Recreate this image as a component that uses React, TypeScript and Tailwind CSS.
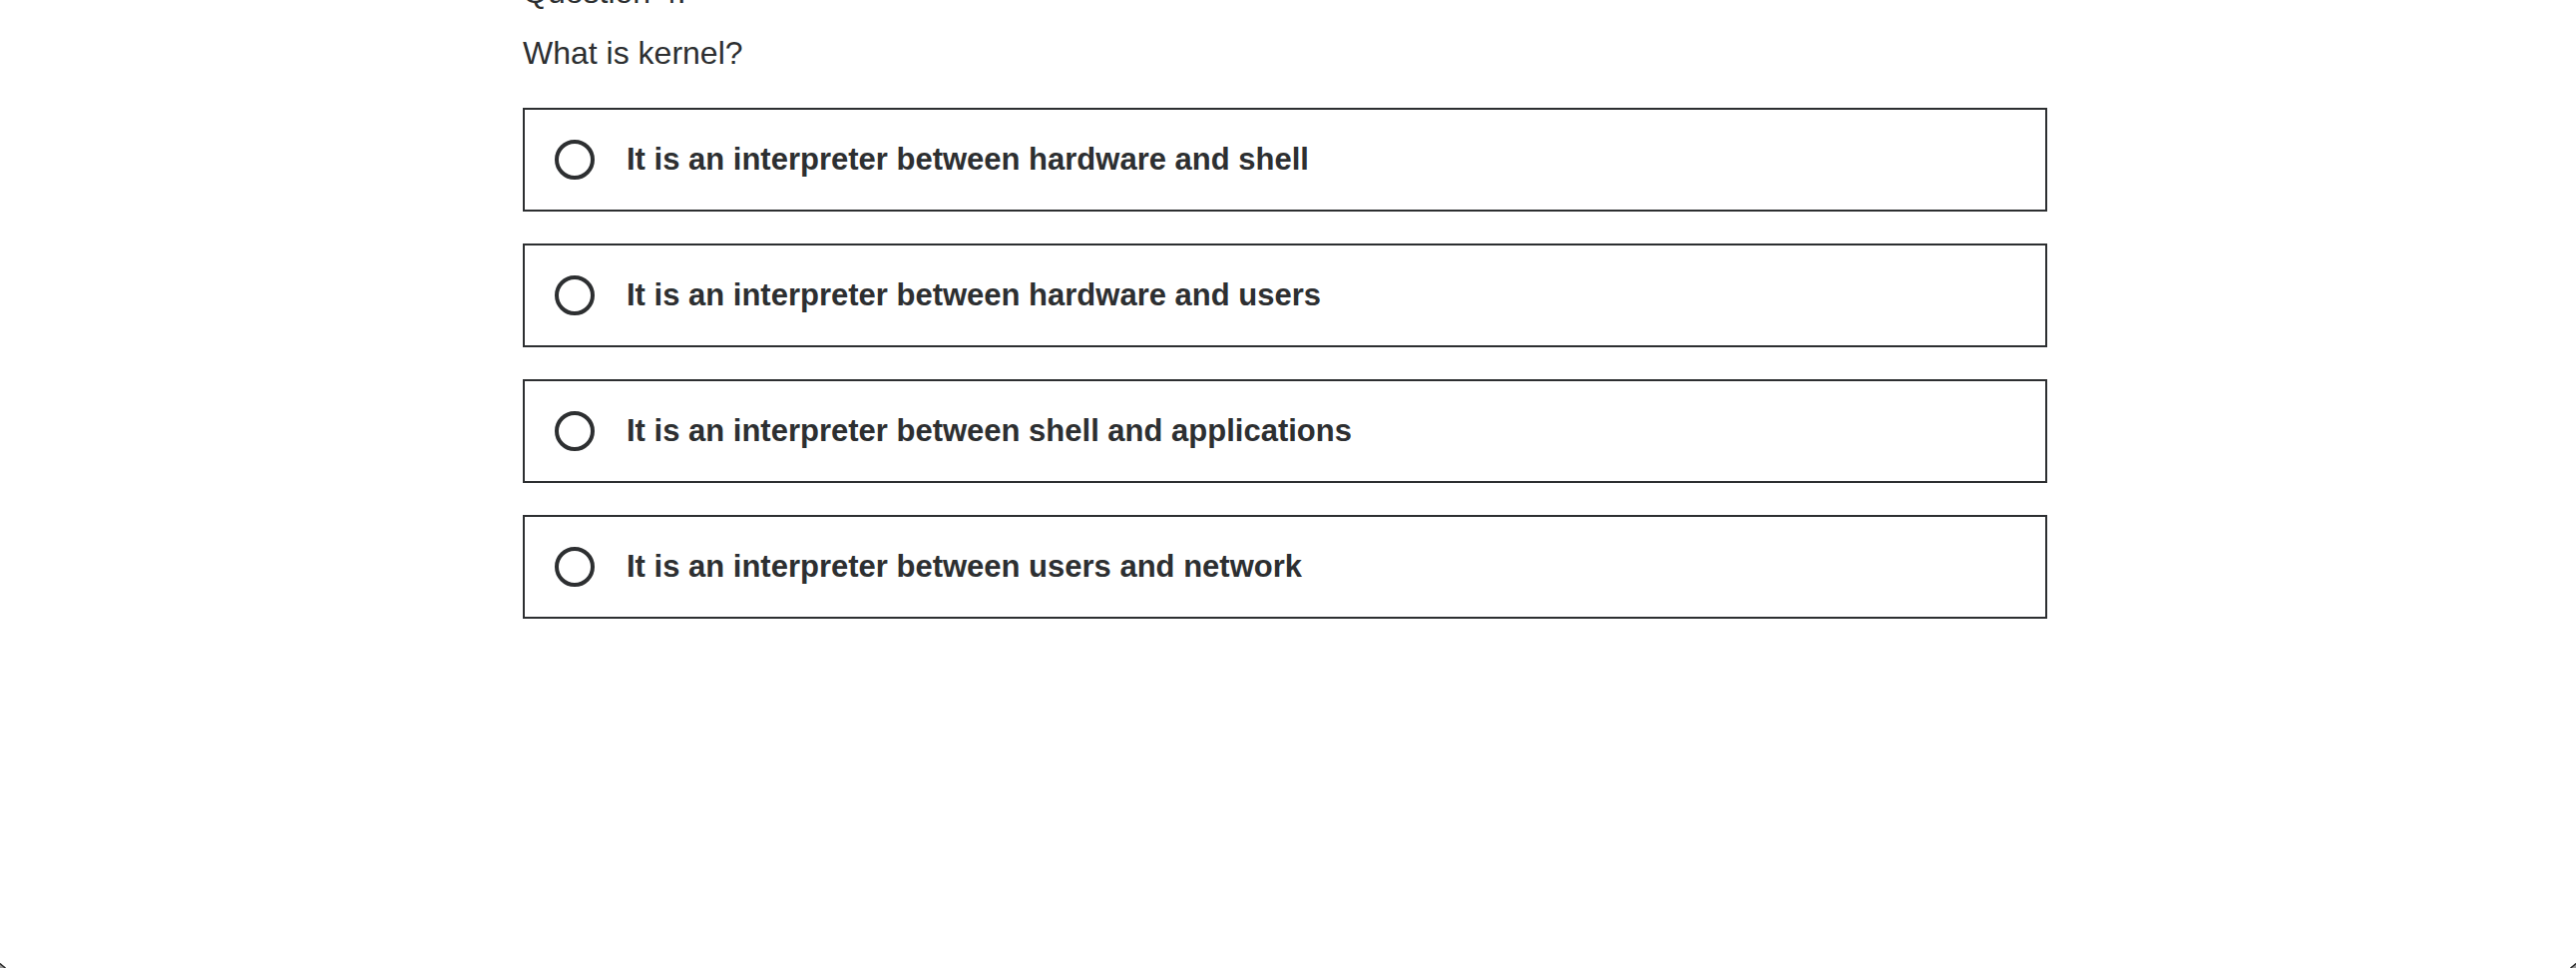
import { useState } from 'react';

const options = [
  'It is an interpreter between hardware and shell',
  'It is an interpreter between hardware and users',
  'It is an interpreter between shell and applications',
  'It is an interpreter between users and network',
];

function WindowCorner({ className }: { className: string }) {
  return (
    <svg aria-hidden="true" viewBox="0 0 6 5" className={`absolute bottom-0 h-[5px] w-[6px] ${className}`}>
      <path d="M0 0 L6 5 L0 5 Z" fill="#9a9a9a" />
      <path d="M0 0.5 Q2.5 3 5.5 5" fill="none" stroke="#2b2b2b" strokeWidth="1.4" />
    </svg>
  );
}

export default function App() {
  const [selected, setSelected] = useState<number | null>(null);

  return (
    <main className="relative flex h-screen justify-center overflow-hidden bg-white pr-[6px] font-['Liberation_Sans',Arial,sans-serif] text-[#2d2f31]">
      <form className="-mt-[30px] w-full max-w-[1528px]">
        <p className="text-[32px] leading-[45px]">Question 4:</p>
        <fieldset className="mt-4">
          <legend className="text-[32px] leading-[45px]">What is kernel?</legend>
          <div className="mt-8 flex flex-col gap-8">
            {options.map((option, index) => (
              <label
                key={option}
                className="flex h-[104px] cursor-pointer items-center gap-8 border-2 border-[#2d2f31] px-[30px]"
              >
                <input
                  type="radio"
                  name="answer"
                  checked={selected === index}
                  onChange={() => setSelected(index)}
                  className="size-10 shrink-0 appearance-none rounded-full border-4 border-[#2d2f31] bg-white checked:border-[12px]"
                />
                <span className="text-[31px] leading-[44px] font-bold">{option}</span>
              </label>
            ))}
          </div>
        </fieldset>
      </form>
      <WindowCorner className="left-0" />
      <WindowCorner className="right-0 -scale-x-100" />
    </main>
  );
}
